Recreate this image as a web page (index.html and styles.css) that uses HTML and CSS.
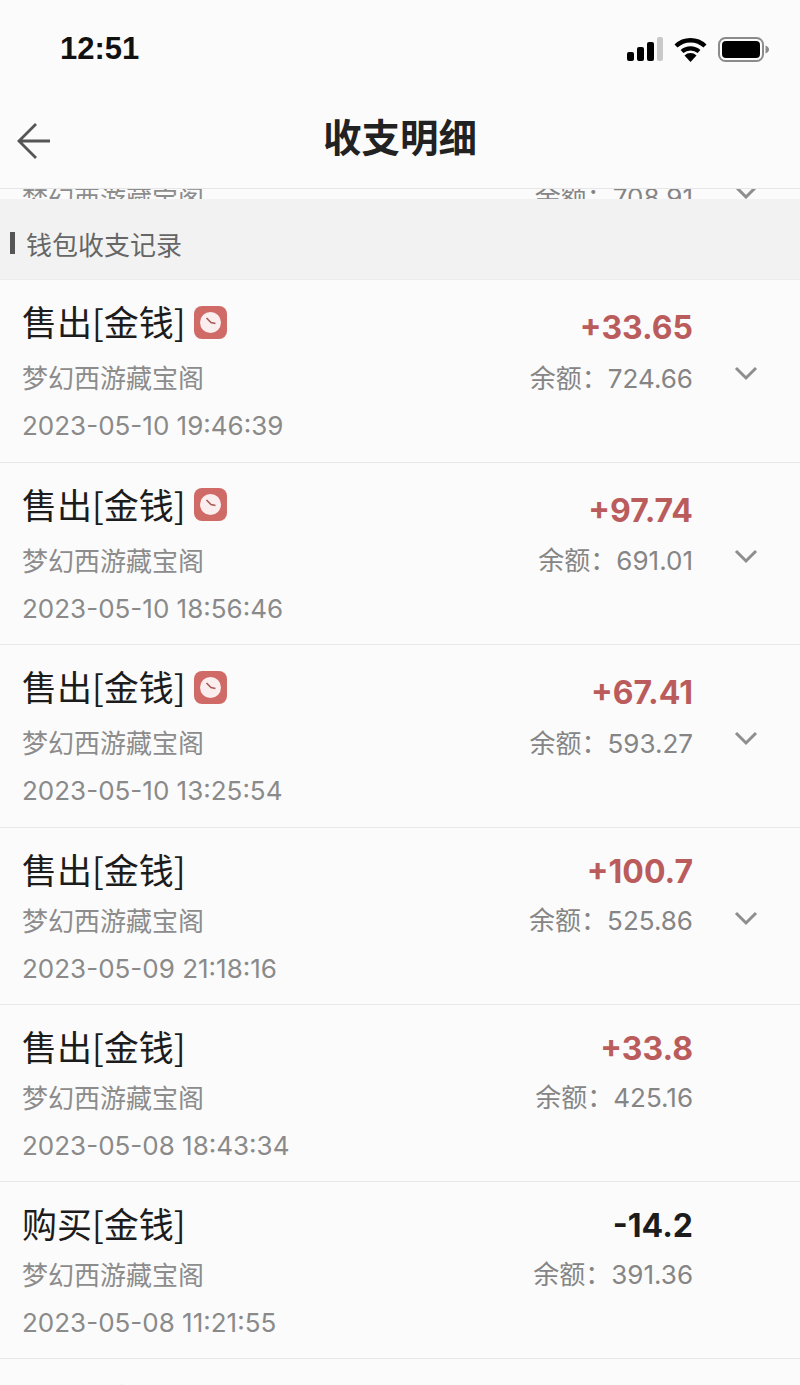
FILE: index.html
```html
<!DOCTYPE html>
<html lang="zh-CN">
<head>
<meta charset="utf-8">
<title>收支明细</title>
<link rel="stylesheet" href="styles.css">
</head>
<body>
<svg class="defs" width="0" height="0" aria-hidden="true">
  <symbol id="chev" viewBox="0 0 24 15"><path d="M2 2 L12 12 L22 2" fill="none" stroke="#8e8e8e" stroke-width="3"/></symbol>
  <symbol id="clock" viewBox="0 0 33 33">
    <rect x="0" y="0" width="33" height="33" rx="8" fill="#cf6a66"/>
    <circle cx="16.5" cy="16.5" r="10.5" fill="#fbeeee"/>
    <path d="M12.5 12 L17 16.5 L21.5 17.5" fill="none" stroke="#a85a58" stroke-width="1.6"/>
  </symbol>
</svg>
<header class="status">
  <span class="time">12:51</span>
  <div class="status-icons">
    <svg class="signal" width="36" height="24" viewBox="0 0 36 24">
      <rect x="0" y="15" width="7" height="9" rx="2" fill="#000"/>
      <rect x="10" y="10" width="7" height="14" rx="2" fill="#000"/>
      <rect x="20" y="5" width="7" height="19" rx="2" fill="#000"/>
      <rect x="30" y="0" width="6" height="24" rx="2" fill="#c9c9c9"/>
    </svg>
    <svg class="wifi" width="33" height="25" viewBox="0 0 33 25">
      <path d="M2 9 A21 21 0 0 1 31 9" fill="none" stroke="#000" stroke-width="4.4"/>
      <path d="M8 14.5 A13 13 0 0 1 25 14.5" fill="none" stroke="#000" stroke-width="4.2"/>
      <path d="M16.5 25 L10.5 18.5 A8.5 8.5 0 0 1 22.5 18.5 Z" fill="#000"/>
    </svg>
    <svg class="battery" width="51" height="25" viewBox="0 0 51 25">
      <rect x="1" y="1" width="44" height="23" rx="6.5" fill="none" stroke="#8b8b8b" stroke-width="2"/>
      <rect x="4" y="4" width="38" height="17" rx="4" fill="#000"/>
      <path d="M47.5 8.5 Q51 10 51 12.5 Q51 15 47.5 16.5 Z" fill="#8b8b8b"/>
    </svg>
  </div>
</header>
<nav class="nav">
  <svg class="back" width="36" height="38" viewBox="0 0 36 38">
    <path d="M34 19 H3 M20 2 L3 19 L20 36" fill="none" stroke="#555" stroke-width="2.8"/>
  </svg>
  <h1 class="nav-title">收支明细</h1>
</nav>
<div class="peek">
  <div class="peek-inner">
    <span class="source">梦幻西游藏宝阁</span>
    <span class="balance">余额：708.91</span>
    <svg class="chevron"><use href="#chev"/></svg>
  </div>
</div>
<div class="section"><span class="section-bar"></span><span class="section-text">钱包收支记录</span></div>
<main>
  <article class="row row-tag">
    <div class="title">售出[金钱]<svg class="badge"><use href="#clock"/></svg></div>
    <div class="amount income">+33.65</div>
    <div class="source">梦幻西游藏宝阁</div>
    <div class="balance">余额：724.66</div>
    <svg class="chevron"><use href="#chev"/></svg>
    <div class="date">2023-05-10 19:46:39</div>
  </article>
  <article class="row row-tag">
    <div class="title">售出[金钱]<svg class="badge"><use href="#clock"/></svg></div>
    <div class="amount income">+97.74</div>
    <div class="source">梦幻西游藏宝阁</div>
    <div class="balance">余额：691.01</div>
    <svg class="chevron"><use href="#chev"/></svg>
    <div class="date">2023-05-10 18:56:46</div>
  </article>
  <article class="row row-tag">
    <div class="title">售出[金钱]<svg class="badge"><use href="#clock"/></svg></div>
    <div class="amount income">+67.41</div>
    <div class="source">梦幻西游藏宝阁</div>
    <div class="balance">余额：593.27</div>
    <svg class="chevron"><use href="#chev"/></svg>
    <div class="date">2023-05-10 13:25:54</div>
  </article>
  <article class="row">
    <div class="title">售出[金钱]</div>
    <div class="amount income">+100.7</div>
    <div class="source">梦幻西游藏宝阁</div>
    <div class="balance">余额：525.86</div>
    <svg class="chevron"><use href="#chev"/></svg>
    <div class="date">2023-05-09 21:18:16</div>
  </article>
  <article class="row">
    <div class="title">售出[金钱]</div>
    <div class="amount income">+33.8</div>
    <div class="source">梦幻西游藏宝阁</div>
    <div class="balance">余额：425.16</div>
    <div class="date">2023-05-08 18:43:34</div>
  </article>
  <article class="row">
    <div class="title">购买[金钱]</div>
    <div class="amount">-14.2</div>
    <div class="source">梦幻西游藏宝阁</div>
    <div class="balance">余额：391.36</div>
    <div class="date">2023-05-08 11:21:55</div>
  </article>
  <article class="row">
    <div class="title">售出[金钱]</div>
  </article>
</main>
</body>
</html>
```
FILE: styles.css
```css
* { box-sizing: border-box; }
html, body { margin: 0; padding: 0; height: 1385px; overflow: hidden; }
body {
  background: #fbfbfb;
  color: #1e1e1e;
  font-family: Inter, "Noto Sans CJK SC", sans-serif;
}
.defs { display: block; height: 0; }

.status {
  height: 100px;
  display: flex;
  justify-content: space-between;
  align-items: center;
  padding: 0 31px 2px 60px;
}
.time { font-family: "Liberation Sans", sans-serif; font-size: 31px; font-weight: 700; color: #111; }
.status-icons { display: flex; align-items: center; }
.signal { margin-right: 11px; }
.wifi { margin-right: 11px; }

.nav {
  height: 89px;
  display: flex;
  align-items: center;
  justify-content: center;
  padding-bottom: 18px;
  position: relative;
  border-bottom: 1px solid #e6e6e6;
}
.back { position: absolute; left: 16px; top: 22px; }
.nav-title { margin: 0; font-size: 38.5px; line-height: 50px; font-weight: 700; font-family: "Noto Sans CJK SC", sans-serif; color: #222; }

.peek { height: 10px; overflow: hidden; }
.peek-inner {
  display: grid;
  grid-template-columns: 1fr auto 107px;
  padding-left: 22px;
  margin-top: -6px;
}
.peek-inner .source, .peek-inner .balance { line-height: 30px; margin-top: 0; }
.peek-inner .chevron { margin-top: 2px; }

.section {
  height: 81px;
  display: flex;
  align-items: center;
  background: #f2f2f2;
  border-bottom: 1px solid #ececec;
  padding: 8px 0 0 10px;
}
.section-bar { width: 5px; height: 22px; background: #555; margin-right: 11px; }
.section-text { font-size: 26px; color: #666; font-family: "Noto Sans CJK SC", sans-serif; }

.row {
  display: grid;
  grid-template-columns: 1fr auto 107px;
  grid-template-rows: 49px 47px 47px;
  padding: 19px 0 14px 22px;
  border-bottom: 1px solid #e8e8e8;
}
.row-tag { grid-template-rows: 54px 47px 47px; padding-bottom: 14.67px; }

.title {
  grid-column: 1;
  grid-row: 1;
  display: flex;
  align-items: center;
  height: 46px;
  margin-top: -1px;
  font-size: 35px;
  line-height: 46px;
  color: #1c1c1c;
  font-family: "Noto Sans CJK SC", sans-serif;
}
.badge { width: 33px; height: 33px; margin-left: 8px; margin-top: 2px; }
.amount {
  grid-column: 2;
  grid-row: 1;
  align-self: end;
  justify-self: end;
  line-height: 48px;
  font-size: 32px;
  font-weight: 700;
  color: #1c1c1c;
}
.row-tag .amount { margin-bottom: 1px; }
.income { color: #bb5c5c; }
.source {
  grid-column: 1;
  grid-row: 2;
  font-size: 26px;
  line-height: 47px;
  color: #8c8c8c;
  font-family: "Noto Sans CJK SC", sans-serif;
}
.balance {
  grid-column: 2;
  grid-row: 2;
  justify-self: end;
  font-size: 26px;
  line-height: 47px;
  margin-top: 1.5px;
  color: #858585;
}
.chevron {
  grid-column: 3;
  grid-row: 2;
  width: 24px;
  height: 15px;
  margin: 13px 0 0 41px;
}
.row:not(.row-tag) .chevron { margin-top: 15px; }
.date {
  grid-column: 1;
  grid-row: 3;
  font-size: 26px;
  line-height: 47px;
  margin-top: 2px;
  color: #8a8a8a;
}
```
